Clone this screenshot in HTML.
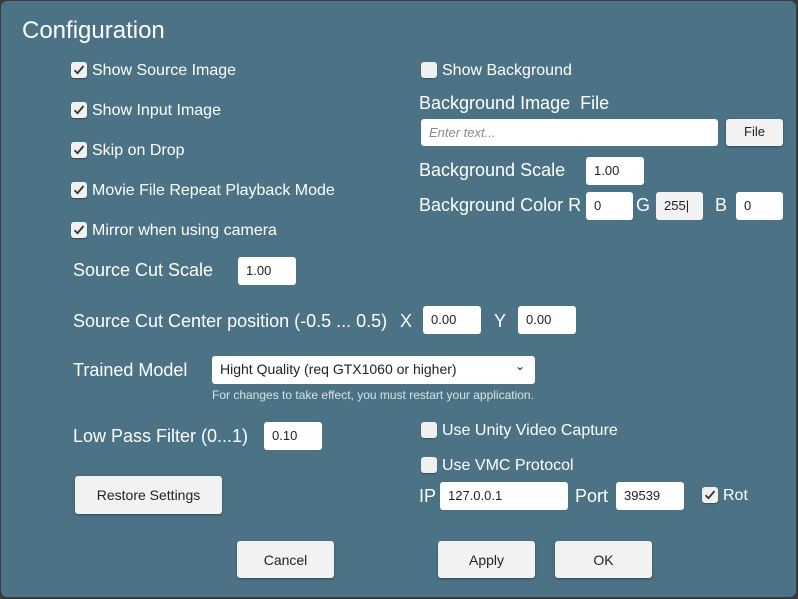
<html><head><style>
body{margin:0;width:798px;height:599px;background:#3a3a3a;overflow:hidden;font-family:"Liberation Sans",sans-serif}
#p{position:absolute;left:1px;top:1px;width:795px;height:596px;background:#4c7285;border-radius:6px;color:#fff}
.a{position:absolute;white-space:nowrap}
.cb{position:absolute;width:16px;height:16px;background:#f0f0f0;border-radius:3px;box-shadow:0 1px 1px rgba(0,0,0,.3)}
.sm{font-size:16px;line-height:20px}
.lg{font-size:18px}
.in{position:absolute;background:#fff;border-radius:3px;font-size:13px;color:#222;box-sizing:border-box;padding:6px 0 0 8px;height:28px}
.bt{position:absolute;background:#f2f2f2;border-radius:3px;font-size:14px;color:#222;text-align:center;box-shadow:0 1px 2px rgba(0,0,0,.35);box-sizing:border-box}
</style></head><body><div id="p">
<div class="a" style="left:21px;top:16px;font-size:24px">Configuration</div>
<svg width="0" height="0" style="position:absolute"><defs><symbol id="ck" viewBox="0 0 16 16"><path d="M3.5 8.2 L6.5 11.2 L12.5 4" fill="none" stroke="#333" stroke-width="1.8"/></symbol></defs></svg>
<div class="cb" style="left:70px;top:61px"><svg width="16" height="16"><use href="#ck"/></svg></div><div class="a sm" style="left:91px;top:60px">Show Source Image</div>
<div class="cb" style="left:70px;top:101px"><svg width="16" height="16"><use href="#ck"/></svg></div><div class="a sm" style="left:91px;top:100px">Show Input Image</div>
<div class="cb" style="left:70px;top:141px"><svg width="16" height="16"><use href="#ck"/></svg></div><div class="a sm" style="left:91px;top:140px">Skip on Drop</div>
<div class="cb" style="left:70px;top:181px"><svg width="16" height="16"><use href="#ck"/></svg></div><div class="a sm" style="left:91px;top:180px">Movie File Repeat Playback Mode</div>
<div class="cb" style="left:70px;top:221px"><svg width="16" height="16"><use href="#ck"/></svg></div><div class="a sm" style="left:91px;top:220px">Mirror when using camera</div>
<div class="a lg" style="left:72px;top:259px">Source Cut Scale</div>
<div class="in" style="left:237px;top:256px;width:58px">1.00</div>
<div class="a lg" style="left:72px;top:310px">Source Cut Center position (-0.5 ... 0.5)</div>
<div class="a lg" style="left:399px;top:310px">X</div>
<div class="in" style="left:422px;top:305px;width:58px">0.00</div>
<div class="a lg" style="left:493px;top:310px">Y</div>
<div class="in" style="left:517px;top:305px;width:58px">0.00</div>
<div class="a lg" style="left:72px;top:359px">Trained Model</div>
<div class="in" style="left:211px;top:355px;width:323px;height:28px;font-size:14px;padding-top:5px">Hight Quality (req GTX1060 or higher)<span style="position:absolute;right:10px;top:3px;font-size:12px">&#8964;</span></div>
<div class="a" style="left:211px;top:387px;font-size:12px;color:#d8e2e8">For changes to take effect, you must restart your application.</div>
<div class="a lg" style="left:72px;top:425px">Low Pass Filter (0...1)</div>
<div class="in" style="left:263px;top:421px;width:58px">0.10</div>
<div class="bt" style="left:74px;top:475px;width:147px;height:38px;padding-top:11px">Restore Settings</div>
<div class="cb" style="left:420px;top:61px"></div><div class="a sm" style="left:441px;top:60px">Show Background</div>
<div class="a lg" style="left:418px;top:92px">Background Image&nbsp; File</div>
<div class="in" style="left:420px;top:118px;width:297px;height:27px;color:#888;font-style:italic">Enter text...</div>
<div class="bt" style="left:725px;top:118px;width:57px;height:27px;padding-top:5px;font-size:13px">File</div>
<div class="a lg" style="left:418px;top:159px">Background Scale</div>
<div class="in" style="left:585px;top:156px;width:58px">1.00</div>
<div class="a lg" style="left:418px;top:194px">Background Color R</div>
<div class="in" style="left:585px;top:191px;width:47px">0</div>
<div class="a lg" style="left:635px;top:194px">G</div>
<div class="in" style="left:655px;top:191px;width:47px;background:#f2f2f2">255|</div>
<div class="a lg" style="left:714px;top:194px">B</div>
<div class="in" style="left:735px;top:191px;width:47px">0</div>
<div class="cb" style="left:420px;top:421px"></div><div class="a sm" style="left:441px;top:420px">Use Unity Video Capture</div>
<div class="cb" style="left:420px;top:456px"></div><div class="a sm" style="left:441px;top:455px">Use VMC Protocol</div>
<div class="a lg" style="left:418px;top:485px">IP</div>
<div class="in" style="left:439px;top:481px;width:128px">127.0.0.1</div>
<div class="a lg" style="left:574px;top:485px">Port</div>
<div class="in" style="left:615px;top:481px;width:68px">39539</div>
<div class="cb" style="left:701px;top:486px"><svg width="16" height="16"><use href="#ck"/></svg></div><div class="a sm" style="left:722px;top:485px">Rot</div>
<div class="bt" style="left:236px;top:540px;width:97px;height:37px;padding-top:11px">Cancel</div>
<div class="bt" style="left:437px;top:540px;width:97px;height:37px;padding-top:11px">Apply</div>
<div class="bt" style="left:554px;top:540px;width:97px;height:37px;padding-top:11px">OK</div>
</div></body></html>
